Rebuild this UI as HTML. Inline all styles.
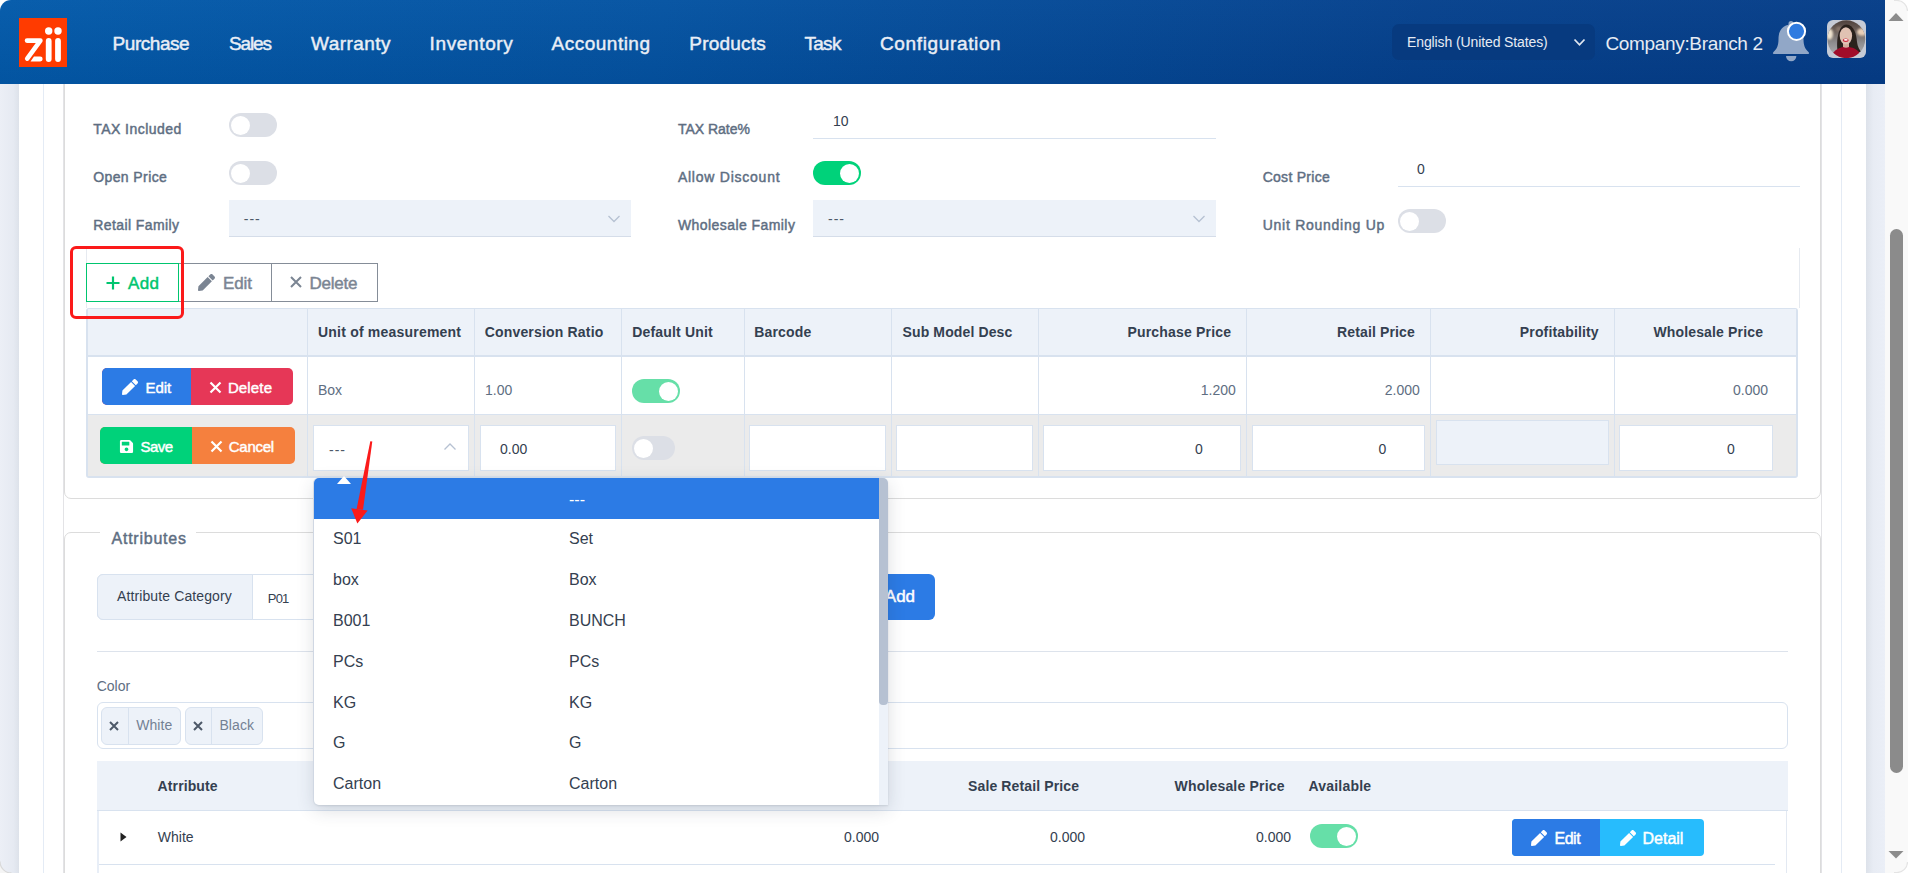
<!DOCTYPE html>
<html><head><meta charset="utf-8">
<style>
html,body{margin:0;padding:0;width:1908px;height:873px;overflow:hidden;background:#fff;}
body{position:relative;font-family:"Liberation Sans",sans-serif;}
.a{position:absolute;box-sizing:border-box;}
.t{position:absolute;white-space:pre;line-height:1;font-family:"Liberation Sans",sans-serif;}
.tg{position:absolute;box-sizing:border-box;border-radius:12px;}
.knob{position:absolute;background:#fff;border-radius:50%;}
</style></head><body>
<!-- page strips -->
<div class="a" style="left:0;top:84px;width:19px;height:789px;background:linear-gradient(to right,#eceff6,#e6eaf2 70%,#dde2ea)"></div>
<div class="a" style="left:1866px;top:84px;width:19px;height:789px;background:linear-gradient(to right,#dde2ea,#e8ecf4 40%,#ebeff7)"></div>
<div class="a" style="left:43px;top:84px;width:1px;height:789px;background:#e4ebf5"></div>
<div class="a" style="left:1841px;top:84px;width:1px;height:789px;background:#e4ebf5"></div>
<div class="a" style="left:63px;top:84px;width:1px;height:789px;background:#e3e3e6"></div>
<div class="a" style="left:1821px;top:84px;width:1px;height:789px;background:#e3e3e6"></div>
<!-- card 1 -->
<div class="a" style="left:64px;top:40px;width:1757px;height:459px;border:1px solid #dcdcdc;border-radius:7px;background:#fff"></div>
<!-- card 2 -->
<div class="a" style="left:64px;top:532px;width:1757px;height:400px;border:1px solid #dcdcdc;border-radius:7px;background:#fff"></div>
<div class="a" style="left:100px;top:528px;width:96px;height:8px;background:#fff"></div>

<!-- header -->
<div class="a" style="left:0;top:0;width:1885px;height:84px;background:linear-gradient(to bottom,rgba(255,255,255,0.025),rgba(0,10,40,0.07)),linear-gradient(100deg,#035aaa 0%,#0453a2 35%,#05418d 75%,#053d88 100%);border-top-left-radius:11px"></div>
<!-- logo -->
<svg class="a" style="left:19px;top:18px" width="48" height="49" viewBox="0 0 48 49">
<rect width="48" height="49" fill="#ff3b00"/>
<g stroke="#fff" stroke-linecap="round" fill="none">
<path d="M8 22.6 H21.4 L8.2 40.6" stroke-width="4.6" stroke-linejoin="round"/>
<line x1="29.7" y1="23" x2="29.7" y2="41" stroke-width="5.8"/>
<line x1="39" y1="23" x2="39" y2="41" stroke-width="5.8"/>
</g>
<path d="M11.5 43.5 L15 38.6 H21.2 A2.45 2.45 0 0 1 21.2 43.5 Z" fill="#fff"/>
<circle cx="29.7" cy="13" r="3.7" fill="#fff"/><circle cx="39" cy="13" r="3.7" fill="#fff"/>
</svg>
<!-- language select -->
<div class="a" style="left:1392px;top:24px;width:203px;height:36px;background:#073a7f;border-radius:7px"></div>
<svg class="a" style="left:1573px;top:38px" width="13" height="9" viewBox="0 0 13 9"><path d="M1.5 1.5 L6.5 6.8 L11.5 1.5" stroke="#dfe6f0" stroke-width="1.8" fill="none"/></svg>
<!-- bell -->
<svg class="a" style="left:1772px;top:20px" width="38" height="42" viewBox="0 0 38 42">
<path d="M19 1 a2.5 2.5 0 0 1 2.5 2.5 v1.2 C29 6.5 31.5 12 31.5 19 C31.5 25 33 29 36.5 32 Q38 33.6 36 34 H2 Q0 33.6 1.5 32 C5 29 6.5 25 6.5 19 C6.5 12 9 6.5 16.5 4.7 V3.5 a2.5 2.5 0 0 1 2.5 -2.5 Z" fill="#91a7c7"/>
<path d="M14 36 H24.4 A5.2 5.2 0 0 1 14 36 Z" fill="#91a7c7"/>
<circle cx="24.5" cy="11.3" r="8.6" fill="#2f7be0" stroke="#fff" stroke-width="2"/>
</svg>
<!-- avatar -->
<div class="a" style="left:1827px;top:20px;width:39px;height:38px;background:#c6cbd6;border-radius:6px"></div>
<svg class="a" style="left:1827px;top:20px" width="39" height="38" viewBox="0 0 39 38">
<defs><clipPath id="cc"><circle cx="19.3" cy="19.2" r="18.9"/></clipPath>
<linearGradient id="bgg" x1="0" y1="0" x2="0" y2="1"><stop offset="0" stop-color="#4e403b"/><stop offset=".3" stop-color="#6f625c"/><stop offset=".6" stop-color="#8e8d8f"/><stop offset="1" stop-color="#b5b5b7"/></linearGradient>
<filter id="bl" x="-20%" y="-20%" width="140%" height="140%"><feGaussianBlur stdDeviation="0.9"/></filter>
<filter id="bl2"><feGaussianBlur stdDeviation="0.4"/></filter></defs>
<g clip-path="url(#cc)">
<rect width="39" height="38" fill="url(#bgg)"/>
<g filter="url(#bl)">
<ellipse cx="2.5" cy="14" rx="3.5" ry="5.5" fill="#efe3cf"/>
<ellipse cx="35" cy="12" rx="5" ry="3.8" fill="#ead0b8"/>
<ellipse cx="12" cy="9" rx="3" ry="2.5" fill="#8a776c"/>
</g>
<g filter="url(#bl2)">
<path d="M10.5 30 C9.5 20 11 5 19.5 4.5 C27 5 29.5 14 30 22 C30.5 27 33 30 34 32 L26 32 Z" fill="#2b201e"/>
<rect x="16" y="21" width="6" height="8" fill="#d3ad9c"/>
<ellipse cx="18.9" cy="15.8" rx="6.2" ry="8.6" fill="#e0c2b3"/>
<ellipse cx="18.8" cy="20.2" rx="2.9" ry="1.7" fill="#cc2438"/>
<ellipse cx="18.8" cy="19.9" rx="2" ry="0.8" fill="#fff"/>
<path d="M3 40 C5 31 11 28 16 27 Q19 28.5 22 27 C28 28 33 30 36 40 Z" fill="#a10a2c"/>
</g>
</g>
</svg>
<!-- window top-right corner + scrollbar -->
<div class="a" style="left:1885px;top:0;width:23px;height:873px;background:#f9f9f9"></div>
<svg class="a" style="left:1888px;top:0" width="20" height="20"><path d="M6 0.5 H9 A10.5 10.5 0 0 1 19.5 11 V20 H20 V0 Z" fill="#fff"/><path d="M6 0.5 H9 A10.5 10.5 0 0 1 19.5 11" stroke="#e4e4e4" stroke-width="1.2" fill="none"/></svg>
<svg class="a" style="left:1888px;top:853px" width="20" height="20"><path d="M6 19.5 H9 A10.5 10.5 0 0 0 19.5 9 V0 H20 V20 Z" fill="#fff"/><path d="M6 19.5 H9 A10.5 10.5 0 0 0 19.5 9" stroke="#e4e4e4" stroke-width="1.2" fill="none"/></svg>
<svg class="a" style="left:1888px;top:12px" width="16" height="10"><path d="M0.5 9 L8 1 L15.5 9 Z" fill="#8c8c8c"/></svg>
<svg class="a" style="left:1888px;top:850px" width="16" height="10"><path d="M0.5 1 L8 8.5 L15.5 1 Z" fill="#8c8c8c"/></svg>
<div class="a" style="left:1890px;top:229px;width:13px;height:544px;background:#8b8b8b;border-radius:6.5px"></div>


<!-- ===== form ===== -->
<div class="tg" style="left:229px;top:113px;width:48px;height:24px;background:#dcdfe6"><div class="knob" style="left:2px;top:2.5px;width:19px;height:19px"></div></div>
<div class="tg" style="left:229px;top:161px;width:48px;height:24px;background:#dcdfe6"><div class="knob" style="left:2px;top:2.5px;width:19px;height:19px"></div></div>
<div class="tg" style="left:1398px;top:209px;width:48px;height:24px;background:#dcdfe6"><div class="knob" style="left:2px;top:2.5px;width:19px;height:19px"></div></div>
<div class="tg" style="left:813px;top:161px;width:48px;height:24px;background:#00d27a"><div class="knob" style="left:26.5px;top:2.5px;width:19px;height:19px"></div></div>
<div class="a" style="left:813px;top:138px;width:403px;height:1px;background:#d8e2ef"></div>
<div class="a" style="left:1398px;top:186px;width:402px;height:1px;background:#d8e2ef"></div>
<div class="a" style="left:229px;top:200px;width:402px;height:37px;background:#edf2f9;border-bottom:1px solid #d5dde9"></div>
<div class="a" style="left:813px;top:200px;width:403px;height:37px;background:#edf2f9;border-bottom:1px solid #d5dde9"></div>
<svg class="a" style="left:607px;top:214px" width="14" height="10"><path d="M1.5 2 L7 7.5 L12.5 2" stroke="#b6c1d2" stroke-width="1.3" fill="none"/></svg>
<svg class="a" style="left:1192px;top:214px" width="14" height="10"><path d="M1.5 2 L7 7.5 L12.5 2" stroke="#b6c1d2" stroke-width="1.3" fill="none"/></svg>

<!-- ===== toolbar ===== -->
<div class="a" style="left:86px;top:248px;width:1px;height:60px;background:#e6eaf0"></div>
<div class="a" style="left:1799px;top:248px;width:1px;height:60px;background:#e6eaf0"></div>
<div class="a" style="left:178px;top:263px;width:200px;height:39px;border:1px solid #858d98"></div>
<div class="a" style="left:271px;top:263px;width:1px;height:39px;background:#858d98"></div>
<div class="a" style="left:86px;top:263px;width:93px;height:39px;border:1px solid #00c56f;background:transparent"></div>
<svg class="a" style="left:105px;top:275px" width="16" height="16"><path d="M8 1.5 V14.5 M1.5 8 H14.5" stroke="#00c56f" stroke-width="2.2"/></svg>
<svg class="a" style="left:198px;top:274.3px" width="17" height="17" viewBox="0 0 512 512"><path fill="#7b8593" d="M290.74 93.24l128.02 128.02-277.99 277.99-114.14 12.6C11.35 513.54-1.56 500.62.14 485.34l12.7-114.22 277.9-277.88zm207.2-19.06l-60.11-60.11c-18.75-18.75-49.16-18.75-67.91 0l-56.55 56.55 128.02 128.02 56.55-56.55c18.75-18.76 18.75-49.16 0-67.91z"/></svg>
<svg class="a" style="left:289px;top:275px" width="14" height="14"><path d="M2 2 L12 12 M12 2 L2 12" stroke="#7b8593" stroke-width="2"/></svg>

<!-- ===== table ===== -->
<div class="a" style="left:86px;top:308px;width:1712px;height:170px;border:2px solid #d8e2ef;border-top-width:1px;border-radius:3px;background:#fff"></div>
<div class="a" style="left:88px;top:309px;width:1708px;height:48px;background:#edf2f9;border-bottom:2px solid #d8e2ef"></div>
<div class="a" style="left:88px;top:414px;width:1708px;height:62px;background:#ebebeb;border-top:1px solid #d8e2ef"></div>
<div class="a" style="left:307px;top:309px;width:1px;height:167px;background:#d8e2ef"></div>
<div class="a" style="left:474px;top:309px;width:1px;height:167px;background:#d8e2ef"></div>
<div class="a" style="left:621px;top:309px;width:1px;height:167px;background:#d8e2ef"></div>
<div class="a" style="left:744px;top:309px;width:1px;height:167px;background:#d8e2ef"></div>
<div class="a" style="left:891px;top:309px;width:1px;height:167px;background:#d8e2ef"></div>
<div class="a" style="left:1038px;top:309px;width:1px;height:167px;background:#d8e2ef"></div>
<div class="a" style="left:1246px;top:309px;width:1px;height:167px;background:#d8e2ef"></div>
<div class="a" style="left:1430px;top:309px;width:1px;height:167px;background:#d8e2ef"></div>
<div class="a" style="left:1614px;top:309px;width:1px;height:167px;background:#d8e2ef"></div>
<!-- row1 buttons -->
<div class="a" style="left:102px;top:368px;width:191px;height:37px;border-radius:5px;overflow:hidden;background:#e63757"><div class="a" style="left:0;top:0;width:89px;height:37px;background:#2c7be5"></div></div>
<svg class="a" style="left:122px;top:379px" width="16" height="16" viewBox="0 0 512 512"><path fill="#fff" d="M290.74 93.24l128.02 128.02-277.99 277.99-114.14 12.6C11.35 513.54-1.56 500.62.14 485.34l12.7-114.22 277.9-277.88zm207.2-19.06l-60.11-60.11c-18.75-18.75-49.16-18.75-67.91 0l-56.55 56.55 128.02 128.02 56.55-56.55c18.75-18.76 18.75-49.16 0-67.91z"/></svg>
<svg class="a" style="left:209px;top:381px" width="13" height="13"><path d="M1.5 1.5 L11.5 11.5 M11.5 1.5 L1.5 11.5" stroke="#fff" stroke-width="2.2"/></svg>
<div class="tg" style="left:632px;top:379px;width:48px;height:24px;background:#66dfa8"><div class="knob" style="left:26.5px;top:2.5px;width:19px;height:19px"></div></div>
<!-- row2 -->
<div class="a" style="left:100px;top:427px;width:195px;height:37px;border-radius:5px;overflow:hidden;background:#f5803e"><div class="a" style="left:0;top:0;width:92px;height:37px;background:#00d27a"></div></div>
<svg class="a" style="left:119px;top:439px" width="15" height="15" viewBox="0 0 448 512"><path fill="#fff" d="M433.94 129.94l-83.88-83.88A48 48 0 0 0 316.12 32H48C21.49 32 0 53.49 0 80v352c0 26.51 21.49 48 48 48h352c26.51 0 48-21.49 48-48V163.88a48 48 0 0 0-14.06-33.94zM224 416c-35.35 0-64-28.65-64-64 0-35.35 28.65-64 64-64s64 28.65 64 64c0 35.35-28.65 64-64 64zm96-304.52V212c0 6.63-5.37 12-12 12H76c-6.63 0-12-5.37-12-12V108c0-6.63 5.37-12 12-12h228.52c3.18 0 6.23 1.26 8.49 3.51l3.48 3.48A11.996 11.996 0 0 1 320 111.48z"/></svg>
<svg class="a" style="left:210px;top:440px" width="13" height="13"><path d="M1.5 1.5 L11.5 11.5 M11.5 1.5 L1.5 11.5" stroke="#fff" stroke-width="2.2"/></svg>
<div class="a" style="left:313px;top:425px;width:156px;height:46px;background:#fff;border:1px solid #d8e2ef"></div>
<svg class="a" style="left:443px;top:442px" width="14" height="10"><path d="M1.5 7.5 L7 2 L12.5 7.5" stroke="#b6c1d2" stroke-width="1.3" fill="none"/></svg>
<div class="a" style="left:480px;top:425px;width:136px;height:46px;background:#fff;border:1px solid #d8e2ef"></div>
<div class="tg" style="left:632px;top:436px;width:43px;height:24px;background:#dcdfe6"><div class="knob" style="left:2px;top:2.5px;width:19px;height:19px"></div></div>
<div class="a" style="left:749px;top:425px;width:137px;height:46px;background:#fff;border:1px solid #d8e2ef"></div>
<div class="a" style="left:896px;top:425px;width:137px;height:46px;background:#fff;border:1px solid #d8e2ef"></div>
<div class="a" style="left:1043px;top:425px;width:198px;height:46px;background:#fff;border:1px solid #d8e2ef"></div>
<div class="a" style="left:1252px;top:425px;width:173px;height:46px;background:#fff;border:1px solid #d8e2ef"></div>
<div class="a" style="left:1436px;top:420px;width:173px;height:45px;background:#edf2f9;border:1px solid #d8e2ef"></div>
<div class="a" style="left:1619px;top:425px;width:154px;height:46px;background:#fff;border:1px solid #d8e2ef"></div>

<!-- ===== attributes card ===== -->
<div class="a" style="left:97px;top:574px;width:790px;height:46px;border:1px solid #d8e2ef;border-radius:6px;background:#fff"></div>
<div class="a" style="left:97px;top:574px;width:156px;height:46px;border:1px solid #d8e2ef;border-radius:6px 0 0 6px;background:#edf2f9"></div>
<div class="a" style="left:840px;top:574px;width:95px;height:46px;border-radius:0 6px 6px 0;background:#2c7be5"></div>
<div class="a" style="left:97px;top:651px;width:1691px;height:1px;background:#dde3ec"></div>
<div class="a" style="left:97px;top:702px;width:1691px;height:47px;border:1px solid #d8e2ef;border-radius:6px"></div>
<div class="a" style="left:101px;top:707px;width:80px;height:38px;border:1px solid #d8e2ef;border-radius:6px;background:#edf2f9"></div>
<div class="a" style="left:128px;top:708px;width:1px;height:36px;background:#d8e2ef"></div>
<div class="a" style="left:185px;top:707px;width:78px;height:38px;border:1px solid #d8e2ef;border-radius:6px;background:#edf2f9"></div>
<div class="a" style="left:211px;top:708px;width:1px;height:36px;background:#d8e2ef"></div>
<svg class="a" style="left:108.5px;top:720.5px" width="10" height="10"><path d="M1 1 L9 9 M9 1 L1 9" stroke="#4d5969" stroke-width="2"/></svg>
<svg class="a" style="left:192.5px;top:720.5px" width="10" height="10"><path d="M1 1 L9 9 M9 1 L1 9" stroke="#4d5969" stroke-width="2"/></svg>
<div class="a" style="left:97px;top:761px;width:1691px;height:50px;background:#edf2f9;border-bottom:1px solid #d8e2ef"></div>
<div class="a" style="left:97px;top:864px;width:1678px;height:1px;background:#d8e2ef"></div>
<svg class="a" style="left:119.5px;top:832px" width="7" height="10"><path d="M0.5 0.5 L6.5 5 L0.5 9.5 Z" fill="#222"/></svg>
<div class="tg" style="left:1310px;top:824px;width:48px;height:24px;background:#66dfa8"><div class="knob" style="left:26.5px;top:2.5px;width:19px;height:19px"></div></div>
<div class="a" style="left:1512px;top:819px;width:192px;height:37px;border-radius:4px;overflow:hidden;background:#27bcfd"><div class="a" style="left:0;top:0;width:88px;height:37px;background:#2c7be5"></div></div>
<svg class="a" style="left:1531px;top:830px" width="16" height="16" viewBox="0 0 512 512"><path fill="#fff" d="M290.74 93.24l128.02 128.02-277.99 277.99-114.14 12.6C11.35 513.54-1.56 500.62.14 485.34l12.7-114.22 277.9-277.88zm207.2-19.06l-60.11-60.11c-18.75-18.75-49.16-18.75-67.91 0l-56.55 56.55 128.02 128.02 56.55-56.55c18.75-18.76 18.75-49.16 0-67.91z"/></svg>
<svg class="a" style="left:1620px;top:830px" width="16" height="16" viewBox="0 0 512 512"><path fill="#fff" d="M290.74 93.24l128.02 128.02-277.99 277.99-114.14 12.6C11.35 513.54-1.56 500.62.14 485.34l12.7-114.22 277.9-277.88zm207.2-19.06l-60.11-60.11c-18.75-18.75-49.16-18.75-67.91 0l-56.55 56.55 128.02 128.02 56.55-56.55c18.75-18.76 18.75-49.16 0-67.91z"/></svg>
<div class="a" style="left:1786px;top:811px;width:1px;height:62px;background:#e3e9f2"></div>
<svg class="a" style="left:0;top:860px" width="14" height="13"><path d="M0 1.5 A11.5 11.5 0 0 0 11.5 13 H0 Z" fill="#f5f5f5"/><path d="M0 1.5 A11.5 11.5 0 0 0 11.5 13" stroke="#d9d9d9" stroke-width="1.3" fill="none"/></svg>
<div class="a" style="left:97px;top:811px;width:2px;height:62px;background:#e8eef7"></div>

<div class="t" style="left:112.6px;top:33.9px;font-size:19px;color:#e9eef6;-webkit-text-stroke:0.45px #e9eef6;letter-spacing:-0.469px;">Purchase</div>
<div class="t" style="left:229.0px;top:33.9px;font-size:19px;color:#e9eef6;-webkit-text-stroke:0.45px #e9eef6;letter-spacing:-1.133px;">Sales</div>
<div class="t" style="left:311.0px;top:33.9px;font-size:19px;color:#e9eef6;-webkit-text-stroke:0.45px #e9eef6;letter-spacing:0.461px;">Warranty</div>
<div class="t" style="left:429.6px;top:33.9px;font-size:19px;color:#e9eef6;-webkit-text-stroke:0.45px #e9eef6;letter-spacing:0.630px;">Inventory</div>
<div class="t" style="left:551.6px;top:33.9px;font-size:19px;color:#e9eef6;-webkit-text-stroke:0.45px #e9eef6;letter-spacing:0.487px;">Accounting</div>
<div class="t" style="left:689.3px;top:33.9px;font-size:19px;color:#e9eef6;-webkit-text-stroke:0.45px #e9eef6;letter-spacing:0.217px;">Products</div>
<div class="t" style="left:804.4px;top:33.9px;font-size:19px;color:#e9eef6;-webkit-text-stroke:0.45px #e9eef6;letter-spacing:-0.693px;">Task</div>
<div class="t" style="left:880.0px;top:33.9px;font-size:19px;color:#e9eef6;-webkit-text-stroke:0.45px #e9eef6;letter-spacing:0.639px;">Configuration</div>
<div class="t" style="left:1407.0px;top:35.3px;font-size:14px;color:#e6ebf3;letter-spacing:-0.109px;">English (United States)</div>
<div class="t" style="left:1605.4px;top:33.6px;font-size:19px;color:#e6ebf3;letter-spacing:-0.330px;">Company:Branch 2</div>
<div class="t" style="left:93.2px;top:122.3px;font-size:14px;color:#5e6e82;-webkit-text-stroke:0.45px #5e6e82;letter-spacing:0.462px;">TAX Included</div>
<div class="t" style="left:93.2px;top:170.3px;font-size:14px;color:#5e6e82;-webkit-text-stroke:0.45px #5e6e82;letter-spacing:0.406px;">Open Price</div>
<div class="t" style="left:93.2px;top:218.3px;font-size:14px;color:#5e6e82;-webkit-text-stroke:0.45px #5e6e82;letter-spacing:0.408px;">Retail Family</div>
<div class="t" style="left:677.9px;top:122.3px;font-size:14px;color:#5e6e82;-webkit-text-stroke:0.45px #5e6e82;letter-spacing:-0.001px;">TAX Rate%</div>
<div class="t" style="left:677.9px;top:170.3px;font-size:14px;color:#5e6e82;-webkit-text-stroke:0.45px #5e6e82;letter-spacing:0.759px;">Allow Discount</div>
<div class="t" style="left:677.9px;top:218.3px;font-size:14px;color:#5e6e82;-webkit-text-stroke:0.45px #5e6e82;letter-spacing:0.434px;">Wholesale Family</div>
<div class="t" style="left:1262.7px;top:170.3px;font-size:14px;color:#5e6e82;-webkit-text-stroke:0.45px #5e6e82;letter-spacing:0.269px;">Cost Price</div>
<div class="t" style="left:1262.7px;top:218.3px;font-size:14px;color:#5e6e82;-webkit-text-stroke:0.45px #5e6e82;letter-spacing:0.739px;">Unit Rounding Up</div>
<div class="t" style="left:833.0px;top:114.1px;font-size:14px;color:#344050;">10</div>
<div class="t" style="left:1417.0px;top:162.1px;font-size:14px;color:#344050;">0</div>
<div class="t" style="left:243.8px;top:211.6px;font-size:14px;color:#4d5969;letter-spacing:1.000px;">---</div>
<div class="t" style="left:828.0px;top:211.6px;font-size:14px;color:#4d5969;letter-spacing:1.000px;">---</div>
<div class="t" style="left:128.0px;top:275.1px;font-size:17px;color:#00c56f;-webkit-text-stroke:0.45px #00c56f;letter-spacing:0.375px;">Add</div>
<div class="t" style="left:223.0px;top:275.1px;font-size:17px;color:#7b8593;-webkit-text-stroke:0.45px #7b8593;letter-spacing:-0.099px;">Edit</div>
<div class="t" style="left:309.5px;top:275.1px;font-size:17px;color:#7b8593;-webkit-text-stroke:0.45px #7b8593;letter-spacing:-0.228px;">Delete</div>
<div class="t" style="left:318.0px;top:324.9px;font-size:14px;color:#344050;font-weight:700;letter-spacing:0.208px;">Unit of measurement</div>
<div class="t" style="left:484.7px;top:324.9px;font-size:14px;color:#344050;font-weight:700;letter-spacing:0.180px;">Conversion Ratio</div>
<div class="t" style="left:632.2px;top:324.9px;font-size:14px;color:#344050;font-weight:700;letter-spacing:0.176px;">Default Unit</div>
<div class="t" style="left:754.3px;top:324.9px;font-size:14px;color:#344050;font-weight:700;letter-spacing:0.161px;">Barcode</div>
<div class="t" style="left:902.5px;top:324.9px;font-size:14px;color:#344050;font-weight:700;letter-spacing:0.128px;">Sub Model Desc</div>
<div class="t" style="left:1127.4px;top:324.9px;font-size:14px;color:#344050;font-weight:700;letter-spacing:0.187px;">Purchase Price</div>
<div class="t" style="left:1337.0px;top:324.9px;font-size:14px;color:#344050;font-weight:700;letter-spacing:0.139px;">Retail Price</div>
<div class="t" style="left:1519.8px;top:324.9px;font-size:14px;color:#344050;font-weight:700;letter-spacing:0.149px;">Profitability</div>
<div class="t" style="left:1653.4px;top:324.9px;font-size:14px;color:#344050;font-weight:700;letter-spacing:0.158px;">Wholesale Price</div>
<div class="t" style="left:318.0px;top:382.9px;font-size:14px;color:#5e6e82;">Box</div>
<div class="t" style="left:485.0px;top:382.9px;font-size:14px;color:#5e6e82;">1.00</div>
<div class="t" style="left:1200.8px;top:382.9px;font-size:14px;color:#5e6e82;">1.200</div>
<div class="t" style="left:1384.8px;top:382.9px;font-size:14px;color:#5e6e82;">2.000</div>
<div class="t" style="left:1733.0px;top:382.9px;font-size:14px;color:#5e6e82;">0.000</div>
<div class="t" style="left:145.4px;top:380.4px;font-size:15px;color:#ffffff;-webkit-text-stroke:0.45px #ffffff;letter-spacing:-0.020px;">Edit</div>
<div class="t" style="left:227.9px;top:380.4px;font-size:15px;color:#ffffff;-webkit-text-stroke:0.45px #ffffff;letter-spacing:0.148px;">Delete</div>
<div class="t" style="left:329.0px;top:443.1px;font-size:14px;color:#4d5969;letter-spacing:1.000px;">---</div>
<div class="t" style="left:500.0px;top:441.6px;font-size:14px;color:#344050;">0.00</div>
<div class="t" style="left:1195.1px;top:441.6px;font-size:14px;color:#344050;">0</div>
<div class="t" style="left:1378.6px;top:441.6px;font-size:14px;color:#344050;">0</div>
<div class="t" style="left:1727.1px;top:441.6px;font-size:14px;color:#344050;">0</div>
<div class="t" style="left:140.6px;top:439.2px;font-size:15px;color:#ffffff;-webkit-text-stroke:0.45px #ffffff;letter-spacing:-0.601px;">Save</div>
<div class="t" style="left:228.8px;top:439.2px;font-size:15px;color:#ffffff;-webkit-text-stroke:0.45px #ffffff;letter-spacing:-0.281px;">Cancel</div>
<div class="t" style="left:111.5px;top:530.6px;font-size:16px;color:#5e6e82;-webkit-text-stroke:0.45px #5e6e82;letter-spacing:0.767px;">Attributes</div>
<div class="t" style="left:117.0px;top:589.3px;font-size:14px;color:#344050;letter-spacing:0.115px;">Attribute Category</div>
<div class="t" style="left:267.8px;top:592.0px;font-size:13px;color:#344050;letter-spacing:-0.820px;">P01</div>
<div class="t" style="left:884.8px;top:588.3px;font-size:17px;color:#ffffff;-webkit-text-stroke:0.45px #ffffff;">Add</div>
<div class="t" style="left:96.7px;top:679.0px;font-size:14px;color:#5e6e82;">Color</div>
<div class="t" style="left:136.2px;top:718.1px;font-size:14px;color:#748194;letter-spacing:0.051px;">White</div>
<div class="t" style="left:219.4px;top:718.1px;font-size:14px;color:#748194;letter-spacing:0.116px;">Black</div>
<div class="t" style="left:157.6px;top:779.1px;font-size:14px;color:#344050;font-weight:700;letter-spacing:0.109px;">Atrribute</div>
<div class="t" style="left:968.0px;top:779.1px;font-size:14px;color:#344050;font-weight:700;letter-spacing:0.128px;">Sale Retail Price</div>
<div class="t" style="left:1174.5px;top:779.1px;font-size:14px;color:#344050;font-weight:700;letter-spacing:0.186px;">Wholesale Price</div>
<div class="t" style="left:1308.6px;top:779.1px;font-size:14px;color:#344050;font-weight:700;letter-spacing:0.179px;">Available</div>
<div class="t" style="left:157.8px;top:830.2px;font-size:14px;color:#344050;letter-spacing:0.001px;">White</div>
<div class="t" style="left:844.0px;top:830.2px;font-size:14px;color:#344050;">0.000</div>
<div class="t" style="left:1050.0px;top:830.2px;font-size:14px;color:#344050;">0.000</div>
<div class="t" style="left:1256.0px;top:830.2px;font-size:14px;color:#344050;">0.000</div>
<div class="t" style="left:1554.4px;top:831.4px;font-size:16px;color:#ffffff;-webkit-text-stroke:0.45px #ffffff;letter-spacing:-0.426px;">Edit</div>
<div class="t" style="left:1642.5px;top:831.4px;font-size:16px;color:#ffffff;-webkit-text-stroke:0.45px #ffffff;letter-spacing:-0.001px;">Detail</div>
<!-- dropdown -->
<div class="a" style="left:314px;top:478px;width:574px;height:327px;background:#fff;border-radius:5px 5px 0 5px;box-shadow:0 5px 18px rgba(40,50,70,.16),-1px 0 0 #dfe6f0,0 1px 2px rgba(40,50,70,.12);overflow:hidden">
  <div class="a" style="left:0;top:0;width:565px;height:41px;background:#2c7be5"></div>
  <div class="a" style="left:565px;top:0;width:9px;height:327px;background:#edf2f9"></div>
  <div class="a" style="left:565px;top:0;width:9px;height:227px;background:#b6c1d2;border-radius:0 0 4px 4px"></div>
</div>
<svg class="a" style="left:336px;top:475px" width="16" height="10"><path d="M1 9 L8 1 L15 9 Z" fill="#fff"/></svg>
<!-- red box -->
<div class="a" style="left:69.5px;top:245.5px;width:114px;height:73px;border:3.5px solid #fb1a1a;border-radius:6px"></div>
<!-- red arrow -->
<svg class="a" style="left:340px;top:430px" width="50" height="100" viewBox="0 0 50 100">
<path d="M30.3 11.2 L32.3 11.6 L23 79.8 L16.6 79 Z" fill="#fb1a1a"/>
<path d="M11.2 78.3 L27.6 80.6 L17.4 93.5 Z" fill="#fb1a1a"/>
</svg>
<div class="t" style="left:569.0px;top:492.4px;font-size:16px;color:#ffffff;">---</div>
<div class="t" style="left:333.0px;top:531.4px;font-size:16px;color:#344050;">S01</div>
<div class="t" style="left:569.0px;top:531.4px;font-size:16px;color:#344050;">Set</div>
<div class="t" style="left:333.0px;top:572.2px;font-size:16px;color:#344050;">box</div>
<div class="t" style="left:569.0px;top:572.2px;font-size:16px;color:#344050;">Box</div>
<div class="t" style="left:333.0px;top:613.0px;font-size:16px;color:#344050;">B001</div>
<div class="t" style="left:569.0px;top:613.0px;font-size:16px;color:#344050;">BUNCH</div>
<div class="t" style="left:333.0px;top:653.8px;font-size:16px;color:#344050;">PCs</div>
<div class="t" style="left:569.0px;top:653.8px;font-size:16px;color:#344050;">PCs</div>
<div class="t" style="left:333.0px;top:694.6px;font-size:16px;color:#344050;">KG</div>
<div class="t" style="left:569.0px;top:694.6px;font-size:16px;color:#344050;">KG</div>
<div class="t" style="left:333.0px;top:735.4px;font-size:16px;color:#344050;">G</div>
<div class="t" style="left:569.0px;top:735.4px;font-size:16px;color:#344050;">G</div>
<div class="t" style="left:333.0px;top:776.2px;font-size:16px;color:#344050;">Carton</div>
<div class="t" style="left:569.0px;top:776.2px;font-size:16px;color:#344050;">Carton</div>
</body></html>
